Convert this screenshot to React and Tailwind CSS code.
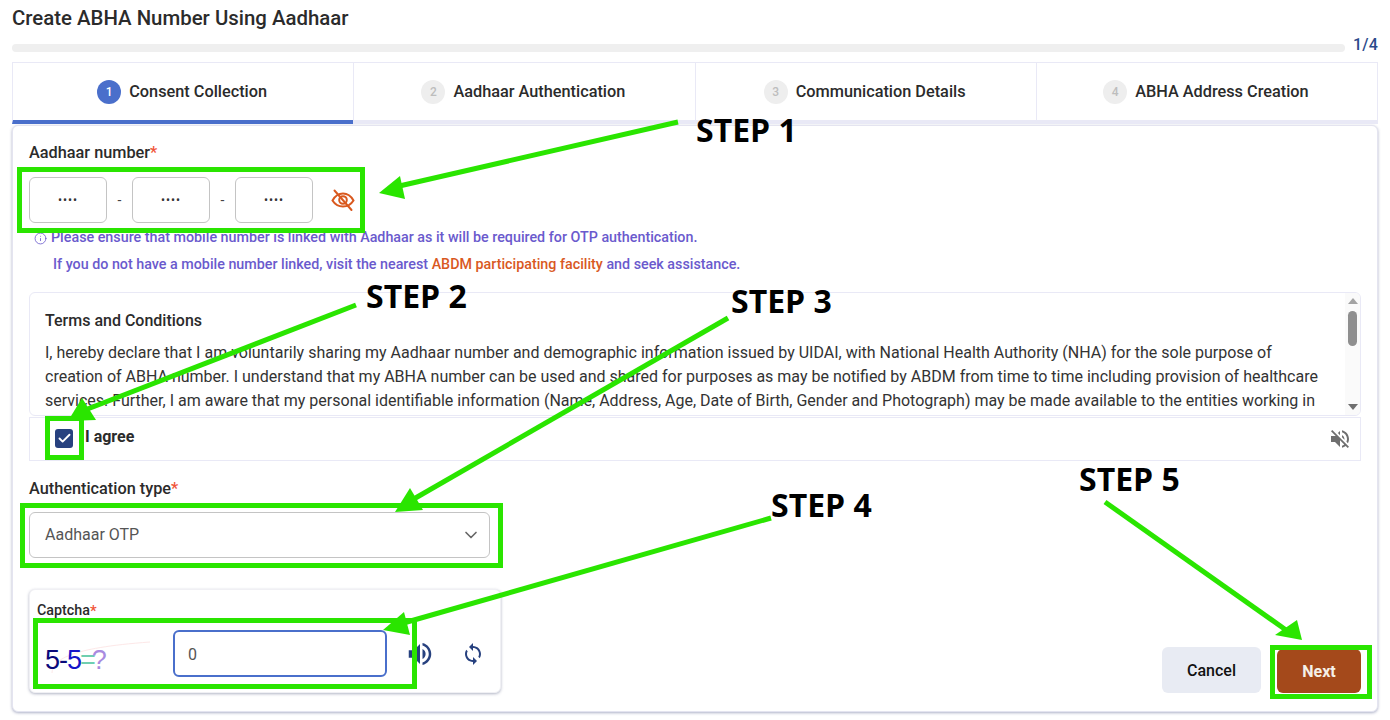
import React from 'react';
import { ChevronDown, Check, Info } from 'lucide-react';
import { MdVolumeUp, MdVolumeOff, MdSync } from 'react-icons/md';

const tabs = [
  { n: 1, label: 'Consent Collection', active: true },
  { n: 2, label: 'Aadhaar Authentication' },
  { n: 3, label: 'Communication Details' },
  { n: 4, label: 'ABHA Address Creation' },
];

// Required-field label with the red star
const Label = ({ children, className }) => (
  <div className={`h-5 pt-[2px] flex items-center text-[16.300px] font-medium text-[#2b2b2b] ${className}`}>
    {children}
    <span className="text-[#f0553a]">*</span>
  </div>
);

const MaskedInput = () => (
  <input
    readOnly
    value="••••"
    className="w-[78px] h-[46px] pb-px border border-[#c4c4c4] rounded-md text-center text-[12px] tracking-[1px] text-[#333] bg-white outline-none"
  />
);

const EyeOff = () => (
  <svg width="24" height="24" viewBox="0 0 24 24" fill="none" stroke="#d9591f" strokeWidth="2" strokeLinecap="round">
    <path d="M1.500 12.500C4 8 8 5.500 12 5.500s8 2.500 10.500 7c-2.500 4-6.500 6-10.500 6s-8-2-10.500-6z" />
    <circle cx="12" cy="12" r="3.800" />
    <path d="M3.500 2.500L20.500 22" />
  </svg>
);

// Green markup drawn over the screenshot: boxes and arrows
const Annotations = () => (
  <svg className="absolute inset-0 pointer-events-none" width="1390" height="720" fill="none">
    <g stroke="#2ae500" strokeWidth="5">
      <rect x="19.500" y="169.500" width="343" height="61" />
      <rect x="47.500" y="418.500" width="34" height="39" />
      <rect x="22.500" y="505.500" width="478" height="60" />
      <rect x="35.500" y="620.500" width="379" height="66" />
      <rect x="1272.500" y="647.500" width="97" height="49" />
      <path d="M678 122L395 187" />
      <path d="M356 305L85 410" />
      <path d="M728 318L412 500" />
      <path d="M771 518L400 624" />
      <path d="M1105 502L1286 630" />
    </g>
    <g fill="#2ae500">
      <path d="M379 193L400 176L405 199z" />
      <path d="M68 421L82 398L96 420z" />
      <path d="M395 512L410 488L423 510z" />
      <path d="M383 630L404 612L410 635z" />
      <path d="M1302 640L1275 635L1297 620z" />
    </g>
  </svg>
);

const Step = ({ className, children }) => (
  <div className={`absolute font-['Open_Sans',sans-serif] font-bold text-[32px] leading-[40px] text-black whitespace-nowrap ${className}`}>
    {children}
  </div>
);

const App = () => {
  return (
    <div className="relative w-[1390px] h-[720px] overflow-hidden bg-white font-['Roboto',sans-serif] text-[#2b2b2b]">
      {/* Title */}
      <div className="h-9 pl-3 flex items-center text-[20.400px] font-medium text-[#2b2b2b]">
        Create ABHA Number Using Aadhaar
      </div>

      {/* Progress */}
      <div className="h-[26px] pl-3 pr-3 flex items-start">
        <div className="flex-1 h-2 mt-2 rounded bg-[#efefef]" />
        <div className="w-[33px] text-right text-base font-medium leading-4 mt-[1px] text-[#2a4a8a] tracking-[0.2px]">1/4</div>
      </div>

      {/* Tabs */}
      <div className="mx-3 h-[62px] flex border-t border-r border-[#e9e9f6]">
        {tabs.map((tab) => (
          <div
            key={tab.n}
            className={`flex-1 pr-[2px] flex items-center justify-center gap-2 border-l border-[#e9e9f6] border-b-4 ${tab.active ? 'border-b-[#4a6fcb]' : 'border-b-[#e9e9f6]'}`}
          >
            <span
              className={`w-6 h-6 rounded-full flex items-center justify-center text-xs font-medium ${tab.active ? 'bg-[#4a6fcb] text-white' : 'bg-[#eeeeee] text-[#bdbdbd]'}`}
            >
              {tab.n}
            </span>
            <span className="pt-[2px] text-[16.300px] font-medium text-[#2b2b2b]">{tab.label}</span>
          </div>
        ))}
      </div>

      {/* Form card */}
      <div className="mx-3 mt-px h-[587px] px-4 pt-4 rounded-md border border-[#e4e4f0] shadow-[0_1px_3px_rgba(70,80,130,0.45)] bg-white">
        <Label>Aadhaar number</Label>
        <div className="mt-[15px] flex items-center">
          <MaskedInput />
          <span className="w-[25px] text-center text-sm text-[#444]">-</span>
          <MaskedInput />
          <span className="w-[25px] text-center text-sm text-[#444]">-</span>
          <MaskedInput />
          <span className="ml-[18px]"><EyeOff /></span>
        </div>

        <div className="mt-1 h-5 pt-[2px] ml-[5px] flex items-center gap-[4px] text-[14.300px] font-medium text-[#6a5acd] whitespace-nowrap">
          <Info size={13} strokeWidth={1.500} />
          Please ensure that mobile number is linked with Aadhaar as it will be required for OTP authentication.
        </div>
        <div className="mt-[7px] h-5 pt-[2px] pl-6 flex items-center text-[14.300px] font-medium text-[#6a5acd] whitespace-pre">
          If you do not have a mobile number linked, visit the nearest <span className="text-[#d9591f]">ABDM participating facility</span> and seek assistance.
        </div>

        {/* Terms */}
        <div className="mt-[18px] h-[124px] flex border border-[#e9e9f6] rounded-md overflow-hidden">
          <div className="flex-1 pl-[15px] pt-4 overflow-hidden text-base leading-6 text-[#333] whitespace-nowrap">
            <div className="font-medium text-[#2b2b2b] mb-2 leading-6">Terms and Conditions</div>
            <div>I, hereby declare that I am voluntarily sharing my Aadhaar number and demographic information issued by UIDAI, with National Health Authority (NHA) for the sole purpose of</div>
            <div>creation of ABHA number. I understand that my ABHA number can be used and shared for purposes as may be notified by ABDM from time to time including provision of healthcare</div>
            <div>services. Further, I am aware that my personal identifiable information (Name, Address, Age, Date of Birth, Gender and Photograph) may be made available to the entities working in</div>
          </div>
          {/* Scrollbar */}
          <div className="w-[15px] bg-[#fafafa] flex flex-col items-center pt-[5px]">
            <span className="w-0 h-0 border-x-[5px] border-x-transparent border-b-[6px] border-b-[#a3a3a3]" />
            <span className="w-[9px] h-[35px] mt-[7px] rounded-full bg-[#8f8f8f]" />
            <span className="w-0 h-0 mt-auto mb-[5px] border-x-[5px] border-x-transparent border-t-[6px] border-t-[#6f6f6f]" />
          </div>
        </div>

        {/* Agree */}
        <div className="mt-px h-11 pl-[25px] pr-[8px] flex items-center border border-[#e9e9f6] bg-white">
          <span className="w-[18px] h-[19px] mt-[-1px] rounded-[3px] bg-[#27417f] flex items-center justify-center">
            <Check size={15} strokeWidth={3} className="text-white" />
          </span>
          <span className="ml-3 mb-[5px] text-base font-bold text-[#2b2b2b]">I agree</span>
          <MdVolumeOff size={24} className="ml-auto text-[#6f6f6f]" />
        </div>

        <Label className="mt-[17px]">Authentication type</Label>
        <div className="mt-[14px] w-[461px] h-[46px] pl-[15px] pr-2 flex items-center justify-between border border-[#c4c4c4] rounded-md text-base text-[#555]">
          Aadhaar OTP
          <ChevronDown size={20} strokeWidth={2} className="text-[#666]" />
        </div>

        {/* Captcha + buttons */}
        <div className="mt-[31px] flex items-end justify-between">
          <div className="w-[472px] h-[104px] px-2 pt-3 rounded-md border border-[#f0f0f4] shadow-[0_1px_3px_rgba(60,70,110,0.4)] bg-white">
            <div className="h-4 pt-[2px] -ml-px flex items-center text-[14.300px] font-medium text-[#2b2b2b]">
              Captcha<span className="text-[#f0553a] text-[15px]">*</span>
            </div>
            <div className="mt-3 flex items-start">
              <div className="relative w-[135px] h-[47px] pt-[15px] pl-[7px] font-['Liberation_Sans',sans-serif] text-[27px] leading-[30px] whitespace-nowrap">
                <svg className="absolute left-0 top-0" width="135" height="47" fill="none" stroke="#fde8e8" strokeWidth="1">
                  <path d="M14 43C15 30 30 18 112 12" />
                </svg>
                <span className="relative tracking-[-1px] text-[#0a0a7a]">5-</span>
                <span className="relative tracking-[-2px] text-[#1414c8]">5</span>
                <span className="relative tracking-[-4px] text-[#6fcfb0]">=</span>
                <span className="relative text-[#a98be0]">?</span>
              </div>
              <input
                readOnly
                value="0"
                className="w-[214px] h-[47px] pl-[13px] pr-[14px] pt-[2px] border-2 border-[#4a6fcb] rounded-md text-base text-[#555] outline-none"
              />
              <MdVolumeUp size={30} className="ml-[18px] mt-[9px] text-[#27417f]" />
              <MdSync size={24} className="ml-[26px] mt-3 text-[#27417f]" />
            </div>
          </div>

          <div className="flex items-end gap-4">
            <button className="w-[99px] h-[46px] pt-[2px] rounded-md bg-[#e8ebf3] text-base font-medium text-[#111]">Cancel</button>
            <button className="w-[84px] h-[44px] pt-[2px] rounded-md bg-[#a4491b] text-base font-bold text-[#f5f0e8]">Next</button>
          </div>
        </div>
      </div>

      <Annotations />
      <Step className="left-[696px] top-[110px]">STEP 1</Step>
      <Step className="left-[366px] top-[276px]">STEP 2</Step>
      <Step className="left-[731px] top-[281px]">STEP 3</Step>
      <Step className="left-[771px] top-[485px]">STEP 4</Step>
      <Step className="left-[1079px] top-[459px]">STEP 5</Step>
    </div>
  );
};

export default App;
